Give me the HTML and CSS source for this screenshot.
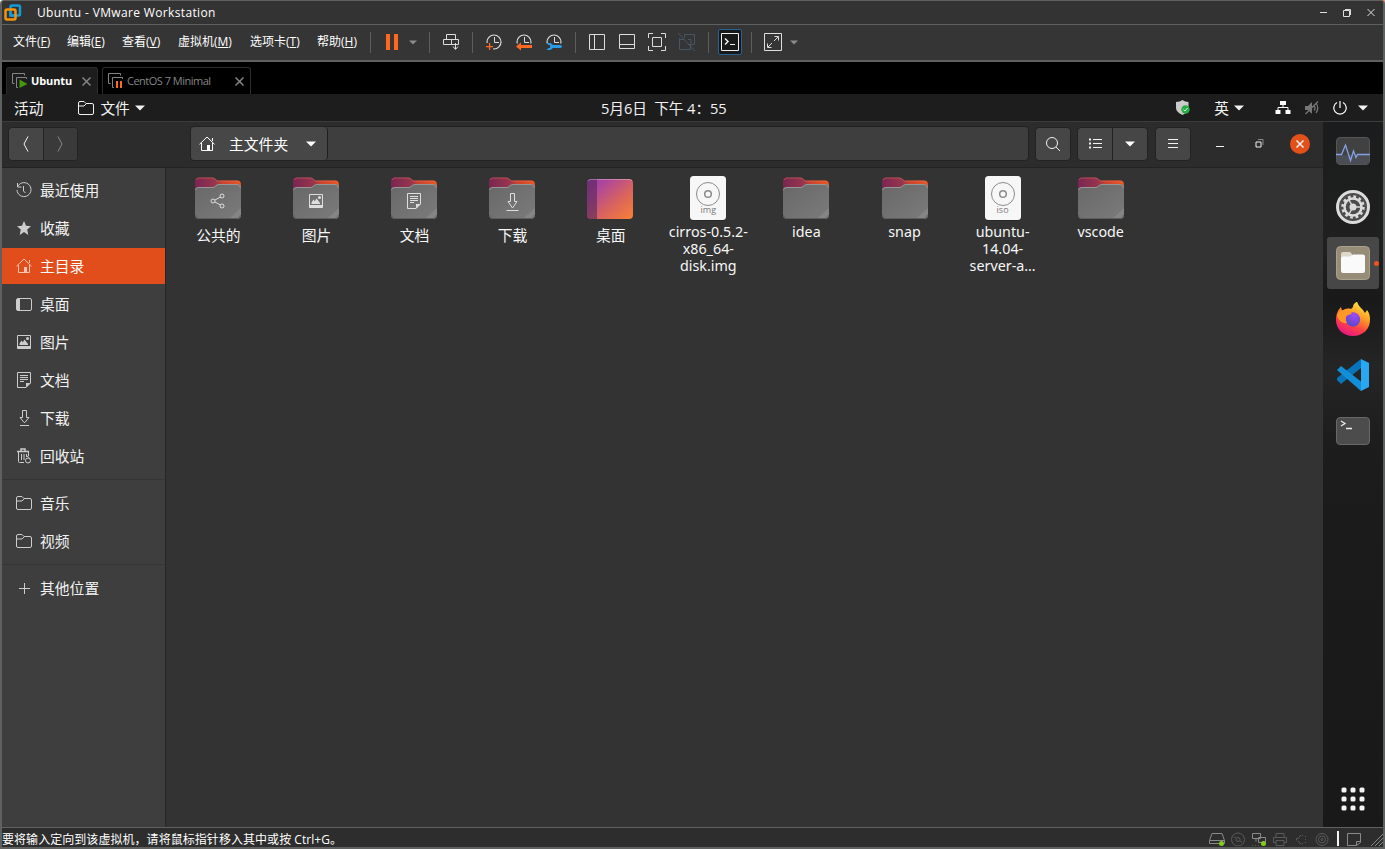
FILE: index.html
```html
<!DOCTYPE html>
<html lang="zh-CN">
<head>
<meta charset="utf-8">
<title>Ubuntu - VMware Workstation</title>
<link rel="stylesheet" href="styles.css">
</head>
<body>
<svg class="defs" width="0" height="0" aria-hidden="true">
  <defs>
    <linearGradient id="gBack" x1="0" x2="1" y1="0" y2="0"><stop offset="0" stop-color="#792552"/><stop offset=".45" stop-color="#98364d"/><stop offset=".6" stop-color="#c9432f"/><stop offset="1" stop-color="#e95722"/></linearGradient>
    <linearGradient id="gFront" x1="0" x2="1" y1="0" y2="1"><stop offset="0" stop-color="#686868"/><stop offset="1" stop-color="#7b7b7b"/></linearGradient>
    <linearGradient id="gDesk" x1="0" x2="1" y1="0" y2="1"><stop offset="0" stop-color="#9d3aa2"/><stop offset=".25" stop-color="#b0489a"/><stop offset=".6" stop-color="#d9635f"/><stop offset="1" stop-color="#fa8035"/></linearGradient>
    <linearGradient id="gFire" x1=".8" x2=".3" y1="0" y2="1"><stop offset="0" stop-color="#fff04a"/><stop offset=".4" stop-color="#ff9a24"/><stop offset=".7" stop-color="#ff3f48"/><stop offset="1" stop-color="#e31587"/></linearGradient>
    <radialGradient id="gGlobe" cx=".6" cy=".2" r=".9"><stop offset="0" stop-color="#a04bf0"/><stop offset="1" stop-color="#5147c8"/></radialGradient>
    <symbol id="folder" viewBox="0 0 46 42">
      <path d="M0 38V4Q0 .5 4 .5H17Q19.500 .5 21 2.500L22.500 3.500H42Q46 3.500 46 7.500V38Z" fill="url(#gBack)"/>
      <path d="M1 3Q2 1 4 1H17.500Q19.500 1 21 3L22.500 4H42Q44 4 45 5.500" fill="none" stroke="#f07a60" stroke-opacity=".45"/>
      <path d="M0 13.500Q0 10 4 10H17.500Q19 10 20 9L22 7.500Q22.500 7 24 7H42Q46 7 46 11V38Q46 42 42 42H4Q0 42 0 38Z" fill="url(#gFront)"/>
      <path d="M34.500 41.500L46 31V38Q46 41.500 42 41.500Z" fill="#858585"/>
      <path d="M.5 13Q.5 10.500 4 10.500H18Q19 10.500 20.500 9.200L22.200 7.900Q23 7.500 24 7.500H42Q45.500 7.500 45.500 11" fill="none" stroke="#969696"/>
      <path d="M.5 38Q.5 41.500 4 41.500H42Q45.500 41.500 45.500 38" fill="none" stroke="#5d5d5d"/>
    </symbol>
    <symbol id="picture" viewBox="0 0 16 16"><path d="M1.500 1.500h13v13h-13z" fill="none" stroke="currentColor"/><path d="M1.500 12h13v3h-13zM3.500 11V9.500l2-3 1.300 1.800L8.500 5.500l3.500 4.500v1z" fill="currentColor"/><circle cx="11.500" cy="4.500" r="1.500" fill="currentColor"/></symbol>
    <symbol id="document" viewBox="0 0 16 16"><path d="M1.500.5h13v10.500l-4.500 4.500h-8.500z M4 3.500h8M4 5.500h8M4 7.500h8M4 9.500h4" fill="none" stroke="currentColor"/><path d="M10 15.500v-4.500h4.500z" fill="currentColor"/></symbol>
    <symbol id="download" viewBox="0 0 16 16"><path d="M6.500 .5h4v7h2.500L8.900 12.500h-.8L4 7.500H6.500zM4 15.500h9" fill="none" stroke="currentColor"/></symbol>
    <symbol id="share" viewBox="0 0 16 16"><g fill="none" stroke="currentColor"><circle cx="3" cy="8" r="2"/><circle cx="12" cy="3" r="2"/><circle cx="12" cy="13" r="2"/><path d="M5 7l5.500-3M5 9l5.500 3"/></g></symbol>
    <symbol id="home" viewBox="0 0 16 16"><path d="M.5 8.300L8 1l7.500 7.300M2.500 7v7.500h11V7M13.500 2v3" fill="none" stroke="currentColor"/><path d="M8 9h3v5.500H8z" fill="currentColor"/></symbol>
    <symbol id="dir" viewBox="0 0 16 16"><path d="M.5 13.500V3Q.5 1.500 2 1.500H6L8 3.500H14Q15.500 3.500 15.500 5V13Q15.500 14.500 14 14.500H2Q.5 14.500.5 13M.5 6H6L8.500 3.500" fill="none" stroke="currentColor"/></symbol>
    <symbol id="clock" viewBox="0 0 24 24"><circle cx="12" cy="12" r="7" fill="none" stroke="currentColor" stroke-width="1.200"/><path d="M12.500 7v5.500H17" fill="none" stroke="currentColor"/></symbol>
    <symbol id="disc" viewBox="0 0 38 46"><rect x="1" y="2" width="36" height="44" rx="4" fill="#222" opacity=".6"/><rect x="1" y="1" width="36" height="44" rx="3.500" fill="#f7f7f7"/><g fill="none" stroke="#8b8b8b"><circle cx="19" cy="19" r="11.500"/><circle cx="19" cy="19" r="3.300" stroke-width="1.500"/></g></symbol>
    <symbol id="tri" viewBox="0 0 10 6"><path d="M0 .5h10L5 5.500z" fill="currentColor"/></symbol>
    <symbol id="vm" viewBox="0 0 16 16"><path d="M2.500 10.500H.5V.5H12.500V2.500M6 14.500H4.500V4.500H14.500V6" fill="none" stroke="#858585"/></symbol>
  </defs>
</svg>
<div class="window">
  <header class="titlebar">
    <svg class="logo" width="18" height="18" viewBox="0 0 18 18" fill="none" stroke-width="2.500"><rect x="6.500" y="1.500" width="9.500" height="10" rx="1.500" stroke="#169bd7"/><rect x="1.500" y="5.500" width="10" height="10" rx="1.500" stroke="#f7930a"/><path d="M6.500 8v3.500H10" stroke="#169bd7"/></svg>
    <h1>Ubuntu - VMware Workstation</h1>
    <svg class="winctl" width="56" height="12" viewBox="0 0 56 12" fill="none" stroke="#dedede"><path d="M1 5.500h7"/><path d="M24.500 3.500h6v6h-6zM26 2.500h5.500V8"/><path d="M48.500 2l7 7M55.500 2l-7 7"/></svg>
  </header>

  <div class="toolbar">
    <nav class="menu"><span class="m1">文件(<u>F</u>)</span><span class="m2">编辑(<u>E</u>)</span><span class="m3">查看(<u>V</u>)</span><span class="m4">虚拟机(<u>M</u>)</span><span class="m5">选项卡(<u>T</u>)</span><span>帮助(<u>H</u>)</span></nav>
    <i class="sep first"></i>
    <span class="tool"><svg viewBox="0 0 24 24"><path d="M6 4h4v16H6zM14 4h4v16h-4z" fill="#ff6820"/></svg></span>
    <span class="drop"><svg width="8" height="5"><use href="#tri"/></svg></span>
    <i class="sep wide"></i>
    <span class="tool"><svg viewBox="0 0 24 24" fill="none" stroke="currentColor"><path d="M7.500 4.500h9v5h-9zM4.500 9.500h15v5h-15zM12.500 9.500v5M16.500 13v6M14 16.500l2.500 3 2.500-3"/></svg></span>
    <i class="sep"></i>
    <span class="tool"><svg viewBox="0 0 24 24"><use href="#clock"/><path d="M3 13h8v7H3z" fill="#353535"/><path d="M4 16h7v1.300H4zM6.900 13h1.300v7H6.900z" fill="#ff6820"/></svg></span>
    <span class="tool"><svg viewBox="0 0 24 24"><use href="#clock"/><path d="M3 13.500h18v8H3z" fill="#353535"/><path d="M4 16.500L9 12.500V15h11v3H9v2.500z" fill="#ff6820"/></svg></span>
    <span class="tool"><svg viewBox="0 0 24 24"><use href="#clock"/><path d="M3 13.500h18v8H3z" fill="#353535"/><path d="M4.500 13h4l2.500 2h7q2 0 2 1.500t-2 1.500h-7l-2.500 2h-4l2-2h1.500v-3H6.500z" fill="#299be6"/></svg></span>
    <i class="sep"></i>
    <span class="tool"><svg viewBox="0 0 24 24" fill="none" stroke="currentColor"><path d="M4.500 4.500h15v15h-15zM9.500 4.500v15"/></svg></span>
    <span class="tool"><svg viewBox="0 0 24 24" fill="none" stroke="currentColor"><path d="M4.500 4.500h15v14h-15zM4.500 14.500h15"/></svg></span>
    <span class="tool"><svg viewBox="0 0 24 24" fill="none" stroke="currentColor"><path d="M3.500 8V3.500H8M16 3.500h4.500V8M20.500 16v4.500H16M8 20.500H3.500V16M7.500 7.500h9v9h-9z"/></svg></span>
    <span class="tool off"><svg viewBox="0 0 24 24" fill="none" stroke="currentColor"><path d="M4.500 8v11.500h11V15M4.500 9.500h5M9.500 4.500h10v10h-5M9.500 4.500v3M13 9.500h3v5h-3M3 3l17 18"/></svg></span>
    <i class="sep"></i>
    <span class="tool"><b class="console"><svg viewBox="0 0 24 24" fill="none" stroke="#efefef"><path d="M3.500 3.500h17v17h-17zM12 14.500h5"/><path d="M7 8.500L10 11.500 7 14.500" stroke-width="1.500"/></svg></b></span>
    <i class="sep"></i>
    <span class="tool"><svg viewBox="0 0 24 24" fill="none" stroke="currentColor"><path d="M3.500 3.500h17v17h-17zM13.500 6.500h4v4M6.500 13.500v4h4M17 7l-4 4M7 17l4-4"/></svg></span>
    <span class="drop"><svg width="8" height="5"><use href="#tri"/></svg></span>
  </div>

  <div class="tabs">
    <div class="tab active"><svg width="16" height="16"><use href="#vm"/><path d="M7.500 6.500v8.500l8-4z" fill="#45960b"/></svg><span>Ubuntu</span><svg class="x" width="9" height="9" viewBox="0 0 9 9"><path d="M.5.5l8 8M8.500.5l-8 8"/></svg></div>
    <div class="tab second"><svg width="16" height="16"><use href="#vm"/><path d="M7 7h8v8H7z" fill="#000"/><path d="M8 8h2v7H8zM12 8h2v7h-2z" fill="#ff6820"/></svg><span>CentOS 7 Minimal</span><svg class="x" width="9" height="9" viewBox="0 0 9 9"><path d="M.5.5l8 8M8.500.5l-8 8"/></svg></div>
  </div>

  <div class="panel">
    <div class="panel-left"><span>活动</span><svg class="pdir" width="16" height="16"><use href="#dir"/></svg><span>文件</span><svg class="ptri" width="10" height="6"><use href="#tri"/></svg></div>
    <time>5月6日&nbsp; 下午 <span class="hm">4：55</span></time>
    <div class="panel-right">
      <svg class="shield" width="16" height="16" viewBox="0 0 16 16"><path d="M7.500 0Q10 2 13.500 2v6q0 4-6 7Q1 12 1 8V2Q5 2 7.500 0z" fill="#cbcbcb"/><circle cx="10.500" cy="9.500" r="4.200" fill="#28ae45"/><path d="M8.500 9.500l1.500 1.500 2.500-3" fill="none" stroke="#d9ffe0"/></svg>
      <span class="lang">英</span><svg class="t1" width="10" height="6"><use href="#tri"/></svg>
      <svg class="net" width="16" height="14" viewBox="0 0 16 14"><path d="M5 0h6v4H5zM.5 9h5v4h-5zM10.500 9h5v4h-5z" fill="#fff"/><path d="M8 4v3M3 9V6.500h10V9" fill="none" stroke="#fff"/></svg>
      <svg class="vol" width="16" height="14" viewBox="0 0 16 14"><path d="M1 5h3l4-4v12L4 9H1z" fill="#777"/><path d="M10 4.500q2 2.500 0 5M12 2q3.500 5 0 10M1.500 13L14 .5" fill="none" stroke="#777" stroke-width="1.300"/></svg>
      <svg class="pow" width="14" height="14" viewBox="0 0 14 14"><path d="M4 1.500A6.200 6.200 0 1 0 10 1.500M7 0v7" fill="none" stroke="#fff" stroke-width="1.200"/></svg>
      <svg width="10" height="6"><use href="#tri"/></svg>
    </div>
  </div>

  <div class="desktop">
    <section class="files">
      <header class="headerbar">
        <div class="nav"><span><svg width="6" height="16" viewBox="0 0 6 16"><path d="M5 .5L1 8l4 7.500"/></svg></span><span class="dim"><svg width="6" height="16" viewBox="0 0 6 16"><path d="M1 .5L5 8l-4 7.500"/></svg></span></div>
        <div class="path"><div class="crumb"><svg width="16" height="16"><use href="#home"/></svg><span>主文件夹</span><svg width="10" height="6"><use href="#tri"/></svg></div></div>
        <div class="btn search"><svg width="16" height="16" viewBox="0 0 16 16"><circle cx="7" cy="7" r="5.500"/><path d="M11 11l4 4"/></svg></div>
        <div class="split"><span><svg width="13" height="12" viewBox="0 0 13 12"><path d="M4 1.500h9M4 5.500h9M4 9.500h9"/><path d="M0 1.500h2M0 5.500h2M0 9.500h2" stroke-width="2"/></svg></span><span><svg width="10" height="6"><use href="#tri" stroke="none"/></svg></span></div>
        <div class="btn burger"><svg width="10" height="11" viewBox="0 0 10 11"><path d="M0 1.500h10M0 5.500h10M0 9.500h10"/></svg></div>
        <div class="ctl"><svg width="8" height="12" viewBox="0 0 8 12"><path d="M0 8.500h8"/></svg><svg width="9" height="9" viewBox="0 0 9 9"><path d="M1 3h5v5H1z"/><path d="M3 .5h5V6" stroke="#888"/></svg><svg class="close" width="20" height="20" viewBox="0 0 20 20"><circle cx="10" cy="10" r="10" fill="#e2501b" stroke="none"/><path d="M6.500 6.500l7 7M13.500 6.500l-7 7" stroke-width="1.500"/></svg></div>
      </header>
      <div class="content">
        <aside class="sidebar">
          <div class="item"><svg viewBox="0 0 16 16" fill="none" stroke="currentColor"><path d="M2 4A7 7 0 1 1 1 8M1.500 1v4h4M7.500 4v5l2 2"/></svg>最近使用</div>
          <div class="item"><svg viewBox="0 0 16 16"><path d="M8 1l2 4.800 5 .4-3.800 3.300L12.300 15 8 12l-4.300 3 1.100-5.500L1 6.200l5-.4z" fill="currentColor"/></svg>收藏</div>
          <div class="item selected"><svg><use href="#home"/></svg>主目录</div>
          <div class="item"><svg viewBox="0 0 16 16"><rect x=".5" y="2.500" width="15" height="12" rx="1.500" fill="none" stroke="currentColor"/><path d="M1 3h3v11.500H1z" fill="currentColor"/></svg>桌面</div>
          <div class="item"><svg><use href="#picture"/></svg>图片</div>
          <div class="item"><svg><use href="#document"/></svg>文档</div>
          <div class="item"><svg><use href="#download"/></svg>下载</div>
          <div class="item"><svg viewBox="0 0 16 16" fill="none" stroke="currentColor"><path d="M1 3.500h12M5 3V1h4v2" stroke-width="1.500"/><path d="M2.500 4v9.500q0 1 1 1H8M12.500 4v4M5.500 6v6M8 6v6M10.500 6v3"/><circle cx="12" cy="12.500" r="2.500"/><path d="M11 8l2.500 2"/></svg>回收站</div>
          <hr>
          <div class="item"><svg><use href="#dir"/></svg>音乐</div>
          <div class="item"><svg><use href="#dir"/></svg>视频</div>
          <hr>
          <div class="item"><svg viewBox="0 0 16 16"><path d="M3 8.500h11M8.500 3v11" stroke="currentColor"/></svg>其他位置</div>
        </aside>
        <main class="grid">
          <figure><div class="pic"><svg class="fold"><use href="#folder"/></svg><svg class="emb"><use href="#share"/></svg></div><figcaption class="zh">公共的</figcaption></figure>
          <figure><div class="pic"><svg class="fold"><use href="#folder"/></svg><svg class="emb"><use href="#picture"/></svg></div><figcaption class="zh">图片</figcaption></figure>
          <figure><div class="pic"><svg class="fold"><use href="#folder"/></svg><svg class="emb"><use href="#document"/></svg></div><figcaption class="zh">文档</figcaption></figure>
          <figure><div class="pic"><svg class="fold"><use href="#folder"/></svg><svg class="emb tall" viewBox="0 0 14 18"><path d="M5.500.5h4v8h2.500L7.500 15 3 8.500h2.500zM1.500 17.500h12" fill="none" stroke="currentColor"/></svg></div><figcaption class="zh">下载</figcaption></figure>
          <figure><div class="pic"><svg class="fold" viewBox="0 0 46 42"><rect y="2" width="46" height="40" rx="4" fill="url(#gDesk)"/><path d="M10 2H4Q0 2 0 6V38Q0 42 4 42H10Z" fill="#4b2352" opacity=".55"/><path d="M1 4Q2 2.500 4 2.500H42Q44 2.500 45 4" fill="none" stroke="#fff" stroke-opacity=".3"/></svg></div><figcaption class="zh">桌面</figcaption></figure>
          <figure><div class="pic"><svg class="disc"><use href="#disc"/></svg><small>img</small></div><figcaption>cirros-0.5.2-<br>x86_64-<br>disk.img</figcaption></figure>
          <figure><div class="pic"><svg class="fold"><use href="#folder"/></svg></div><figcaption>idea</figcaption></figure>
          <figure><div class="pic"><svg class="fold"><use href="#folder"/></svg></div><figcaption>snap</figcaption></figure>
          <figure><div class="pic"><svg class="disc"><use href="#disc"/></svg><small>iso</small></div><figcaption>ubuntu-<br>14.04-<br>server-a…</figcaption></figure>
          <figure><div class="pic"><svg class="fold"><use href="#folder"/></svg></div><figcaption>vscode</figcaption></figure>
        </main>
      </div>
    </section>
    <aside class="dock">
      <div class="app"><svg viewBox="0 0 34 34"><rect x=".5" y="3.500" width="33" height="27" rx="3.500" fill="#414141" stroke="#555"/><path d="M1 21h32v6q0 3-3 3H4q-3 0-3-3z" fill="#4a4d54"/><path d="M0 20.500h5.500L9.500 11l5 15.500L17.500 17l2.500 6.500 1.500-3H34" fill="none" stroke="#85a2e6" stroke-width="1.300"/></svg></div>
      <div class="app"><svg viewBox="0 0 34 34" fill="none"><circle cx="17" cy="17" r="15.500" fill="#4c4c4c" stroke="#dcdcdc" stroke-width="3"/><circle cx="17" cy="17" r="8.500" stroke="#dcdcdc" stroke-width="2.500"/><circle cx="17" cy="17" r="10.500" stroke="#dcdcdc" stroke-width="2.500" stroke-dasharray="2.750 2.750"/><circle cx="17" cy="17" r="3.500" fill="#dcdcdc"/><path d="M17 17h8M17 17l-4 7M17 17l-4-7" stroke="#dcdcdc" stroke-width="1.500"/></svg></div>
      <div class="app current"><svg viewBox="0 0 34 34"><rect x=".5" y=".5" width="33" height="33" rx="4" fill="#968c78" stroke="#aaa18c"/><path d="M5 8q0-2 2-2h7l2 2v5H5z" fill="#ddd8ca"/><path d="M5 12q0-1.500 2-1.500h7l3-2h10q2 0 2 2V25q0 2-2 2H7q-2 0-2-2z" fill="#fafafa"/></svg><i></i></div>
      <div class="app"><svg viewBox="0 0 34 34"><path d="M17 34C7 34 0 27 0 18 0 12 2 8 5 5l1 4c2-2 5-3 9-2l2-2c0-3 2-4 4-5.500C22 3 24 5 27 8l2 3 2-3c3 4 3 7 3 10 0 9-7 16-17 16z" fill="url(#gFire)"/><circle cx="17" cy="17.500" r="7.200" fill="url(#gGlobe)"/><path d="M1 13C3 8 8 7 12 9l4 2.500c-2 1.500-4 1-6 2.500-1 3 0 5 1 7-5 1-9-3-10-8z" fill="#ff9925"/></svg></div>
      <div class="app"><svg viewBox="0 0 34 34"><path d="M25 1v9L5 26l-4-4v-2z" fill="#0874ba"/><path d="M1 12l4-4 20 15.500V33z" fill="#158ed8"/><path d="M25 1l8 4v24l-8 4z" fill="#2aa7f1"/></svg></div>
      <div class="app"><svg viewBox="0 0 34 34"><rect x=".5" y="3.500" width="33" height="27" rx="3.500" fill="#4c4c4c" stroke="#686868"/><path d="M5 7l4 2.500L5 12M10 14.500h6" fill="none" stroke="#eee" stroke-width="1.300"/></svg></div>
      <div class="app all"><svg viewBox="0 0 34 34" fill="#f4f4f4"><rect x="5.500" y="5.500" width="5" height="5" rx="1.500"/><rect x="14.500" y="5.500" width="5" height="5" rx="1.500"/><rect x="23.500" y="5.500" width="5" height="5" rx="1.500"/><rect x="5.500" y="14.500" width="5" height="5" rx="1.500"/><rect x="14.500" y="14.500" width="5" height="5" rx="1.500"/><rect x="23.500" y="14.500" width="5" height="5" rx="1.500"/><rect x="5.500" y="23.500" width="5" height="5" rx="1.500"/><rect x="14.500" y="23.500" width="5" height="5" rx="1.500"/><rect x="23.500" y="23.500" width="5" height="5" rx="1.500"/></svg></div>
    </aside>
  </div>

  <footer class="status">
    <span>要将输入定向到该虚拟机，请将鼠标指针移入其中或按 Ctrl+G。</span>
    <svg width="175" height="18" viewBox="0 0 175 18" fill="none" stroke="#5a5a5a">
      <path d="M4 5.500h10l2.500 7v3h-15v-3zM1.500 12.500h15" stroke="#8a8a8a"/><circle cx="13.500" cy="15.500" r="2.500" fill="#84cd16" stroke="none"/>
      <circle cx="30" cy="11.500" r="6.500"/><circle cx="30" cy="11.500" r="2"/><path d="M26 9l2 1M32 13l2 1"/>
      <path d="M44.500 5.500h8v5h-8zM50.500 9.500h7v5h-7zM48 10.500v3" stroke="#8a8a8a"/><path d="M44 17.500h9" stroke-dasharray="1 2"/><circle cx="55.500" cy="15.500" r="2.500" fill="#84cd16" stroke="none"/>
      <path d="M68 9.500v-4h8v4M68 14.500h-2.500v-5h13v5H76M68 12.500h8v5h-8z"/>
      <path d="M88.500 10.500h1.500l3-3.500M90 13l3 3.500M88.500 10.500v2M94.500 7v1M94.500 15v1M97.500 8v1M97.500 11v1M97.500 14v1" />
      <circle cx="114" cy="11.500" r="6"/><circle cx="114" cy="11.500" r="3.500"/><circle cx="114" cy="11.500" r="1"/>
      <path d="M130 3v15" stroke="#f5f5f5" stroke-width="2"/>
      <path d="M139.500 5.500h13v9l-4 3h-9zM148.500 17.500v-4h4" stroke="#8a8a8a"/>
      <path d="M163 18L175 6M167 18l8-8M171 18l4-4" stroke="#888"/>
    </svg>
  </footer>
</div>
</body>
</html>
```

FILE: styles.css
```css
* { box-sizing: border-box; }
body {
  margin: 0;
  height: 849px;
  overflow: hidden;
  background: linear-gradient(90deg, #fff 50%, #f4907e 50%);
  font-family: "Open Sans", "Noto Sans CJK SC", sans-serif;
  color: #f2f2f2;
}
svg { display: block; flex: none; }
.defs { position: absolute; }
.window {
  height: 849px;
  display: grid;
  grid-template-rows: 24px 37px 32px 28px 706px 19px;
  border: 2px solid #5f6060;
  border-top-width: 1px;
  border-radius: 4px 4px 0 0;
  overflow: hidden;
  background: #333;
}

/* Title bar */
.titlebar { display: flex; align-items: center; background: #333; border-bottom: 1px solid #5f6060; padding: 0 8px 0 2px; }
.titlebar h1 { flex: 1; margin: 0 0 0 15px; font-size: 12px; font-weight: 400; line-height: 20px; letter-spacing: .35px; color: #fff; }

/* Menu and tool buttons */
.toolbar { display: flex; align-items: center; color: #ddd; background: #353535; border-bottom: 2px solid #606060; }
.menu { display: flex; width: 368px; padding: 0 0 2px 11px; font: 12px/18px "Open Sans", "Noto Sans CJK SC", sans-serif; color: #fff; white-space: nowrap; letter-spacing: 0; }
.menu u { text-underline-offset: 1px; }
.m1 { width: 54px; }
.m2 { width: 55px; }
.m3 { width: 56px; }
.m4 { width: 72px; }
.m5 { width: 67px; }
.sep { width: 1px; height: 21px; margin: 0 6px; background: #5e5e5e; }
.sep.first { margin-left: 0; }
.sep.wide { margin-left: 10px; }
.tool { width: 30px; display: flex; justify-content: center; margin-bottom: 1px; }
.tool svg { width: 24px; height: 24px; }
.tool.off { color: #465563; }
.drop { width: 12px; padding-left: 2px; color: #8b8b8b; }
.console { width: 24px; height: 26px; border: 1px solid #24629a; border-radius: 2px; background: #191919; display: flex; align-items: center; justify-content: center; }

/* VM tabs */
.tabs { display: flex; align-items: flex-end; gap: 4px; padding-left: 4px; background: #000; font-size: 11px; }
.tab { display: flex; align-items: center; width: 92px; height: 27px; padding: 0 6px 0 5px; border: 1px solid #2c2c2c; border-bottom: 0; border-radius: 3px 3px 0 0; background: #000; color: #858585; }
.tab.active { background: #1d1d1d; color: #fff; font-weight: 700; letter-spacing: -.1px; }
.tab span { flex: 1; margin-left: 3px; padding-bottom: 1px; white-space: nowrap; }
.tab.second { width: 149px; letter-spacing: -.5px; }
.tab .x { stroke: #858585; stroke-width: 1.5; }

/* GNOME panel */
.panel { display: grid; grid-template-columns: 598px 1fr auto; align-items: center; padding: 0 15px 0 12px; background: #1d1d1d; border-bottom: 1px solid #3b3b3b; font-size: 14.7px; line-height: 22px; }
.panel > * { white-space: nowrap; }
.panel-left { display: flex; align-items: center; width: 586px; }
.pdir { margin: 0 6px 0 35px; }
.ptri { margin-left: 5px; }
.panel time { margin-left: -11px; letter-spacing: -.1px; }
.hm { font-family: "Open Sans", "Noto Sans CJK TC", sans-serif; }
.panel-right { display: flex; align-items: center; }
.lang { margin-left: 23px; }
.t1 { margin: 0 31px 0 5px; }
.vol { margin: 0 13px 0 13px; }
.pow { margin-right: 11px; }

.desktop { display: grid; grid-template-columns: 1321px 60px; border-bottom: 1px solid #606060; }
.files { display: grid; grid-template-rows: 46px 1fr; }

/* Files header bar */
.headerbar { display: flex; align-items: center; padding: 0 0 2px 6px; background: #2c2c2c; border-bottom: 1px solid #232323; color: #fff; }
.headerbar svg { fill: none; stroke: #f2f2f2; }
.nav, .split { display: flex; height: 34px; border: 1px solid #222; border-radius: 4px; background: #464646; overflow: hidden; }
.nav { width: 70px; }
.split { width: 71px; margin-right: 7px; }
.nav span, .split span { flex: 1; display: grid; place-items: center; }
.nav span + span, .split span + span { border-left: 1px solid #222; }
.nav .dim { background: #3a3a3a; }
.nav .dim svg { stroke: #888; }
.path { width: 839px; height: 35px; margin: 0 6px 0 112px; border: 1px solid #222; border-radius: 4px; background: #3e3e3e; }
.crumb { display: flex; align-items: center; width: 137px; height: 33px; padding: 0 11px 0 8px; border-right: 1px solid #1f1f1f; border-radius: 4px; background: #474747; font-size: 14.8px; line-height: 22px; }
.crumb span { flex: 1; margin-left: 14px; }
.crumb svg, .split span + span svg { stroke: none; }
.btn { width: 36px; height: 34px; display: grid; place-items: center; border: 1px solid #222; border-radius: 4px; background: #464646; }
.search { margin-right: 6px; }
.ctl { display: flex; align-items: center; margin-left: 25px; }
.ctl svg + svg { margin-left: 31px; }
.ctl .close { margin-left: 26px; }

/* Places sidebar */
.content { display: grid; grid-template-columns: 164px 1fr; }
.sidebar { padding-top: 4px; border-right: 1px solid #272727; background: #3e3e3e; font-size: 14.8px; line-height: 22px; }
.item { display: flex; align-items: center; height: 36px; margin-bottom: 2px; padding-left: 14px; }
.item svg { width: 16px; height: 16px; margin-right: 8px; color: #cdcdcd; }
.item.selected { background: #e24e1b; color: #fff; }
.item.selected svg { color: #ffc5b0; }
.sidebar hr { height: 1px; margin: 5px 0 5px; border: 0; background: #353535; }

/* Icon view */
.grid { display: grid; grid-template-columns: repeat(10, 98.1px); align-content: start; padding: 7px 0 0 2.8px; background: #333; }
.grid figure { margin: 0; text-align: center; }
.pic { display: grid; justify-items: center; height: 48px; padding-top: 2px; }
.pic > * { grid-area: 1 / 1; }
.fold { width: 46px; height: 42px; }
.emb { width: 16px; height: 16px; margin-top: 16px; color: #dedede; }
.emb.tall { width: 14px; height: 18px; }
.disc { width: 38px; height: 46px; margin-top: -2px; }
.pic small { margin-top: 26px; font-size: 9px; line-height: 14px; color: #777; }
figcaption { font: 14.3px/17px "Noto Sans", "Open Sans", sans-serif; color: #f7f7f7; }
figcaption.zh { font: 14.8px/24px "Noto Sans CJK SC", sans-serif; padding-left: 1px; }

/* Launcher */
.dock { display: flex; flex-direction: column; gap: 4px; align-items: center; padding: 3px 0 2px; background: linear-gradient(#1b1c1d, #202020 18%, #191919 25%, #252525 35%, #1d1d1d 45%, #1b1b1b 55%, #191919); }
.app { display: grid; place-items: center; width: 52px; height: 52px; flex: none; border-radius: 3px; }
.app svg { width: 34px; height: 34px; }
.app.current { position: relative; background: #474747; }
.app.current i { position: absolute; right: 0; top: 24px; width: 5px; height: 5px; border-radius: 50%; background: #ed5422; }
.app.all { margin-top: auto; }

/* Status bar */
.status { display: flex; justify-content: space-between; background: #2d2d2d; font-size: 12px; line-height: 24px; color: #fff; white-space: nowrap; letter-spacing: .05px; overflow: hidden; }
```
